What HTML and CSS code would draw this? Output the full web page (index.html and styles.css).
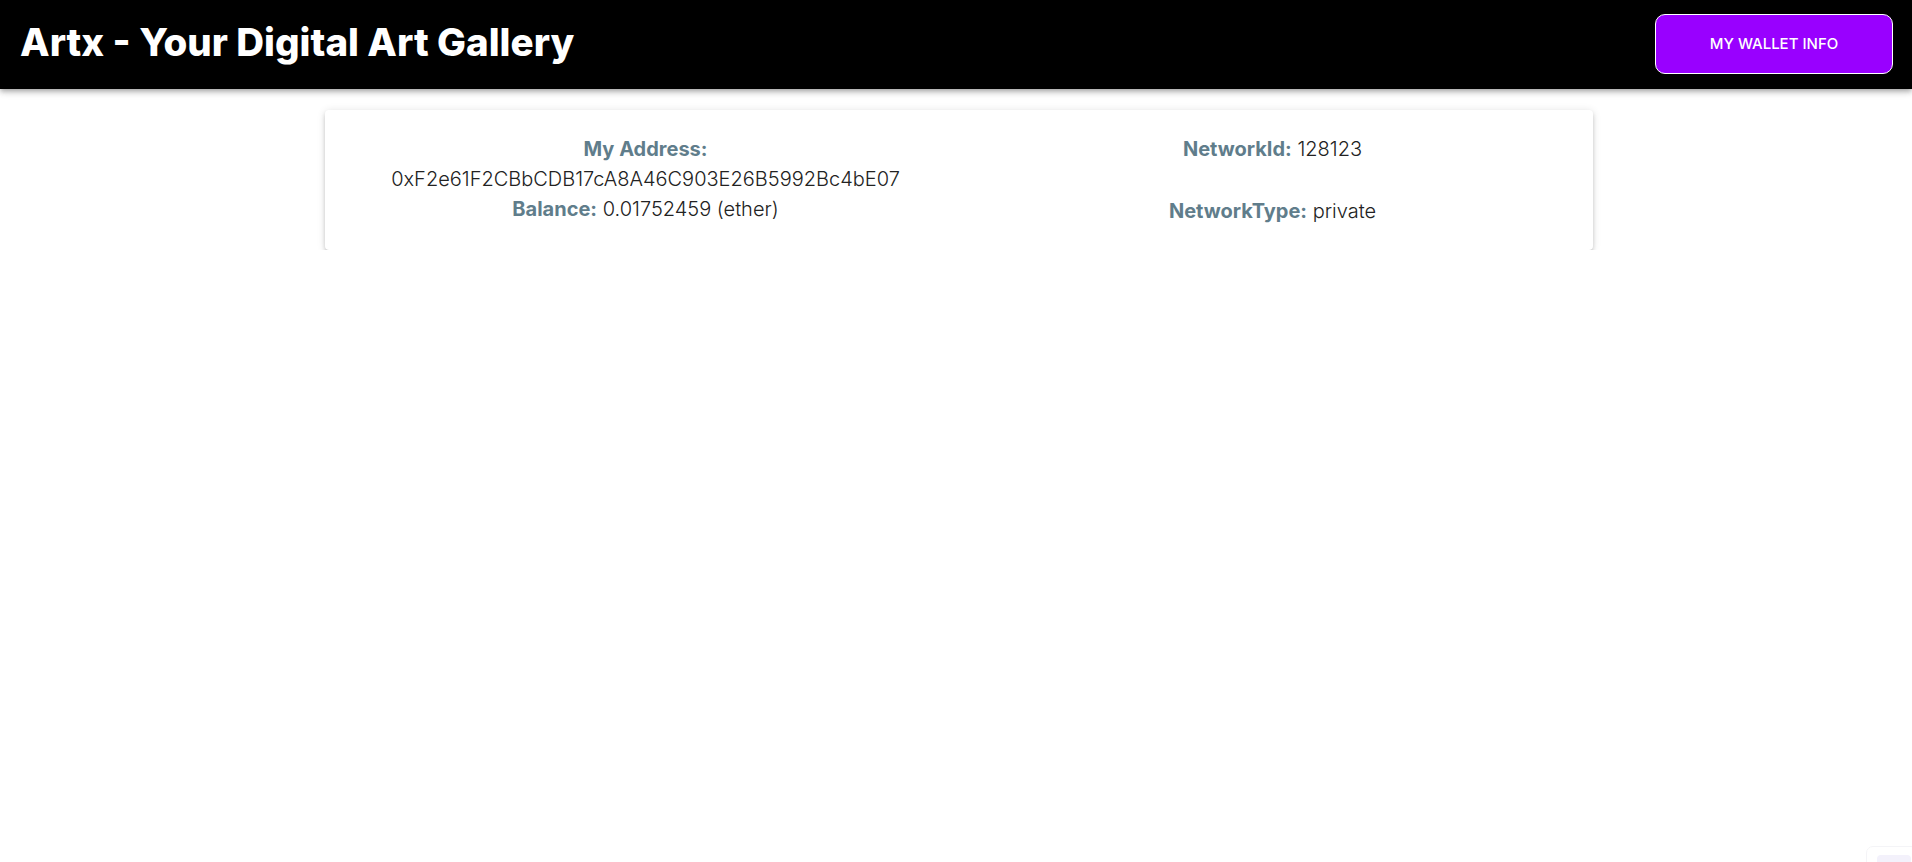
FILE: index.html
```html
<!DOCTYPE html>
<html lang="en">
<head>
<meta charset="utf-8">
<title>Artx - Your Digital Art Gallery</title>
<link rel="stylesheet" href="styles.css">
</head>
<body>
<header class="app-bar">
  <h1 class="brand">Artx - Your Digital Art Gallery</h1>
  <button class="wallet-btn" type="button">My Wallet Info</button>
</header>
<main class="content">
  <section class="wallet-card">
    <div class="col col-left">
      <div class="line"><span class="label">My Address:</span></div>
      <div class="line"><span class="value">0xF2e61F2CBbCDB17cA8A46C903E26B5992Bc4bE07</span></div>
      <div class="line"><span class="label">Balance:</span> <span class="value">0.01752459 (ether)</span></div>
    </div>
    <div class="col col-right">
      <div class="line"><span class="label">NetworkId:</span> <span class="value">128123</span></div>
      <div class="line"><span class="label">NetworkType:</span> <span class="value">private</span></div>
    </div>
  </section>
</main>
<div class="corner-widget"><div class="corner-bar"></div></div>
</body>
</html>
```

FILE: styles.css
```css
html, body {
  margin: 0;
  padding: 0;
  background: #ffffff;
}

body {
  font-family: Inter, "Open Sans", "Liberation Sans", sans-serif;
  color: #222222;
}

.app-bar {
  height: 89px;
  background: #000000;
  display: flex;
  align-items: center;
  justify-content: space-between;
  padding: 0 19px 0 20px;
  box-sizing: border-box;
  box-shadow: 0 2px 4px -1px rgba(0,0,0,0.2), 0 4px 5px 0 rgba(0,0,0,0.14), 0 1px 10px 0 rgba(0,0,0,0.12);
  position: relative;
}

.brand {
  margin: 0 0 4px 0;
  color: #ffffff;
  font-size: 38.5px;
  font-weight: 800;
  line-height: 1.2;
}

.wallet-btn {
  width: 238px;
  height: 60px;
  margin-top: -2px;
  background: #9900ff;
  color: #ffffff;
  border: 1px solid #ffffff;
  border-radius: 10px;
  font-family: inherit;
  font-size: 15px;
  font-weight: 500;
  text-transform: uppercase;
  cursor: pointer;
}

.content {
  padding: 21px 0 0 6px;
}

.wallet-card {
  width: 1268px;
  height: 140px;
  margin: 0 auto;
  box-sizing: border-box;
  padding: 24px 7px;
  background: #ffffff;
  border-radius: 4px;
  box-shadow: 0 3px 3px -2px rgba(0,0,0,0.2), 0 3px 4px 0 rgba(0,0,0,0.14), 0 1px 8px 0 rgba(0,0,0,0.12);
  display: grid;
  grid-template-columns: 1fr 1fr;
}

.col {
  text-align: center;
  font-size: 20px;
  line-height: 30px;
}

.col-right {
  display: flex;
  flex-direction: column;
  justify-content: space-between;
}

.label {
  color: #607d8b;
  font-weight: 700;
}

.value {
  color: #222222;
  font-weight: 300;
}

.corner-widget {
  position: fixed;
  right: -6px;
  bottom: -8px;
  width: 52px;
  height: 24px;
  border: 1px solid #f4f4f7;
  border-radius: 7px;
  box-sizing: border-box;
  padding: 8px 6px 0 10px;
}

.corner-bar {
  height: 10px;
  border-radius: 4px;
  background: #f3f1fb;
}
```
